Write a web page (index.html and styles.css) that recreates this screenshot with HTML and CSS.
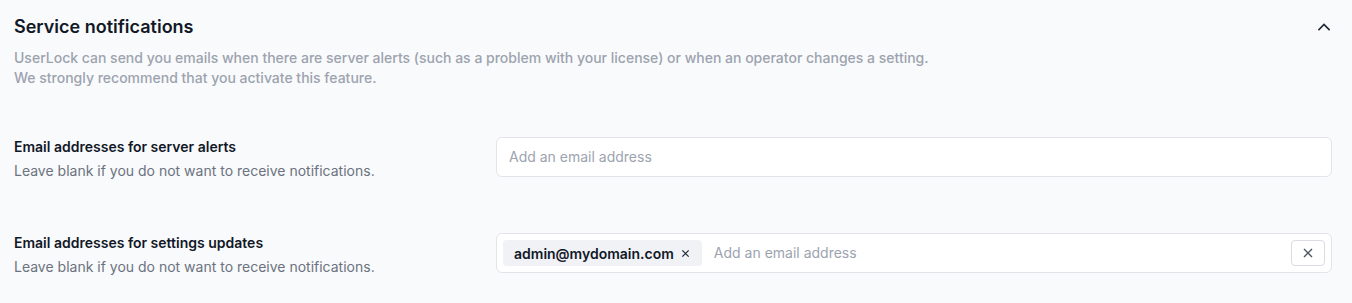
FILE: index.html
```html
<!doctype html>
<html lang="en">
  <head>
    <meta charset="UTF-8" />
    <meta name="viewport" content="width=device-width, initial-scale=1.0" />
    <title>Service notifications</title>
    <link rel="stylesheet" href="styles.css">
  </head>
  <body>
    <section class="panel">
      <div class="panel-header">
        <h2>Service notifications</h2>
        <button class="collapse-btn" aria-label="Collapse">
          <svg viewBox="0 0 12 8" fill="none" stroke="currentColor">
            <path d="M1 6.5 6 1.5l5 5" stroke-width="1.6" stroke-linecap="square" stroke-linejoin="miter"></path>
          </svg>
        </button>
      </div>
      <p class="panel-desc">
        UserLock can send you emails when there are server alerts (such as a problem with your license) or when an operator changes a setting.<br>
        We strongly recommend that you activate this feature.
      </p>

      <div class="field-row">
        <div class="field-label">
          <h4>Email addresses for server alerts</h4>
          <p>Leave blank if you do not want to receive notifications.</p>
        </div>
        <div class="tag-input">
          <input type="text" placeholder="Add an email address" />
        </div>
      </div>

      <div class="field-row">
        <div class="field-label">
          <h4>Email addresses for settings updates</h4>
          <p>Leave blank if you do not want to receive notifications.</p>
        </div>
        <div class="tag-input">
          <span class="tag">
            admin@mydomain.com
            <svg class="tag-remove" viewBox="0 0 10 10" fill="none" stroke="currentColor">
              <path d="M1.5 1.5l7 7M8.5 1.5l-7 7" stroke-width="1.3"></path>
            </svg>
          </span>
          <input type="text" placeholder="Add an email address" />
          <button class="clear-btn" aria-label="Clear">
            <svg viewBox="0 0 10 10" fill="none" stroke="currentColor">
              <path d="M1 1l8 8M9 1 1 9" stroke-width="1.4"></path>
            </svg>
          </button>
        </div>
      </div>
    </section>
  </body>
</html>
```

FILE: styles.css
```css
* {
  margin: 0;
  padding: 0;
  box-sizing: border-box;
}

body {
  font-family: Inter, "Noto Sans", sans-serif;
  background: #f9fafb;
  color: #111827;
}

.panel {
  padding: 13px 20px 0 14px;
}

.panel-header {
  display: flex;
  align-items: center;
  justify-content: space-between;
}

.panel-header h2 {
  font-size: 18px;
  line-height: 28px;
  font-weight: 600;
  color: #111827;
}

.collapse-btn {
  background: none;
  border: none;
  width: 20px;
  height: 20px;
  display: flex;
  align-items: center;
  justify-content: center;
  color: #1f2937;
  margin-right: -2px;
}

.collapse-btn svg {
  width: 12px;
  height: 8px;
}

.panel-desc {
  margin-top: 7px;
  font-size: 14px;
  line-height: 20px;
  font-weight: 500;
  color: #9ca3af;
}

.field-row {
  display: grid;
  grid-template-columns: 466px 1fr;
  gap: 16px;
  align-items: start;
  margin-top: 49px;
}

.field-row + .field-row {
  margin-top: 52px;
}

.field-label h4 {
  font-size: 14px;
  line-height: 20px;
  font-weight: 600;
  color: #111827;
}

.field-label p {
  margin-top: 4px;
  font-size: 14px;
  line-height: 20px;
  color: #6b7280;
}

.tag-input {
  display: flex;
  align-items: center;
  gap: 12px;
  height: 40px;
  padding: 0 6px;
  background: #fff;
  border: 1px solid #e2e4e9;
  border-radius: 6px;
}

.tag-input input {
  flex: 1;
  border: none;
  outline: none;
  background: transparent;
  font-family: inherit;
  font-size: 14px;
  line-height: 20px;
  color: #111827;
  padding: 0 0 1px 6px;
}

.tag + input {
  padding-left: 0;
}

.tag-input input::placeholder {
  color: #9ca3af;
}

.tag {
  display: inline-flex;
  align-items: center;
  gap: 7px;
  height: 26px;
  padding: 0 12px 0 11px;
  background: #f1f2f5;
  border-radius: 4px;
  font-size: 14px;
  font-weight: 600;
  color: #111827;
}

.tag-remove {
  width: 9px;
  height: 9px;
  color: #1f2937;
}

.clear-btn {
  width: 34px;
  height: 26px;
  display: flex;
  align-items: center;
  justify-content: center;
  background: #fff;
  border: 1px solid #d9dce2;
  border-radius: 4px;
  color: #4b5563;
}

.clear-btn svg {
  width: 10px;
  height: 10px;
}
```
